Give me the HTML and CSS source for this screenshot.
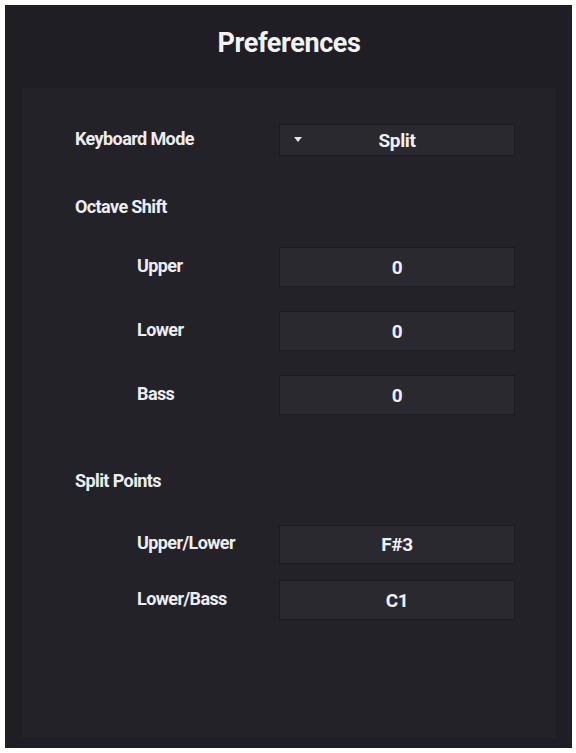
FILE: index.html
```html
<!DOCTYPE html>
<html>
<head>
<meta charset="utf-8">
<link rel="stylesheet" href="styles.css">
</head>
<body>
<div class="frame">
  <div class="title">Preferences</div>
  <div class="panel">
    <div class="row row-mode">
      <div class="label">Keyboard Mode</div>
      <div class="field field-select">
        <svg class="caret" width="8" height="6" viewBox="0 0 8 6"><path d="M0 0 L8 0 L4 5 Z" fill="#e6e6ea"/></svg>
        <span class="value">Split</span>
      </div>
    </div>
    <div class="heading heading-octave">Octave Shift</div>
    <div class="row row-upper">
      <div class="label sub">Upper</div>
      <div class="field"><span class="value">0</span></div>
    </div>
    <div class="row row-lower">
      <div class="label sub">Lower</div>
      <div class="field"><span class="value">0</span></div>
    </div>
    <div class="row row-bass">
      <div class="label sub">Bass</div>
      <div class="field"><span class="value">0</span></div>
    </div>
    <div class="heading heading-split">Split Points</div>
    <div class="row row-ul">
      <div class="label sub">Upper/Lower</div>
      <div class="field"><span class="value">F#3</span></div>
    </div>
    <div class="row row-lb">
      <div class="label sub">Lower/Bass</div>
      <div class="field"><span class="value">C1</span></div>
    </div>
  </div>
</div>
</body>
</html>
```
FILE: styles.css
```css
* { box-sizing: border-box; }
html, body {
  margin: 0;
  padding: 0;
  background: #ffffff;
}
body {
  padding: 5px 4px 5px 5px;
  font-family: Roboto, "Liberation Sans", sans-serif;
  color: #ececf0;
}
.frame {
  width: 567px;
  height: 743px;
  background: #1f1e24;
  display: flex;
  flex-direction: column;
  padding: 0 16px 10px 17px;
}
.title {
  height: 83px;
  display: flex;
  align-items: center;
  justify-content: center;
  padding-bottom: 8px;
  font-size: 27px;
  font-weight: 700;
  letter-spacing: -0.4px;
  color: #f2f2f4;
}
.panel {
  flex: 1;
  background: #232228;
  padding-top: 37px;
  display: flex;
  flex-direction: column;
}
.row {
  display: grid;
  grid-template-columns: 258px 234px;
  align-items: center;
}
.label, .heading {
  font-size: 18px;
  font-weight: 700;
  letter-spacing: -0.6px;
  padding-left: 53px;
  line-height: 20px;
  color: #ededf0;
}
.row .label {
  margin-top: -3px;
}
.label.sub {
  padding-left: 115px;
}
.field {
  height: 38px;
  background: #2a292f;
  box-shadow: 0 0 0 1px #1c1b20;
  display: flex;
  align-items: center;
  justify-content: center;
  position: relative;
}
.field-select {
  height: 30px;
}
.caret {
  position: absolute;
  left: 14px;
  top: 12px;
}
.value {
  font-size: 19px;
  font-weight: 700;
  letter-spacing: -0.4px;
  color: #f0f0f3;
}
.heading-octave { margin-top: 42px; }
.row-upper { margin-top: 31px; }
.row-lower { margin-top: 26px; }
.row-bass { margin-top: 26px; }
.heading-split { margin-top: 57px; }
.row-ul { margin-top: 35px; }
.row-ul .field { height: 37px; }
.row-lb { margin-top: 18px; }
```
